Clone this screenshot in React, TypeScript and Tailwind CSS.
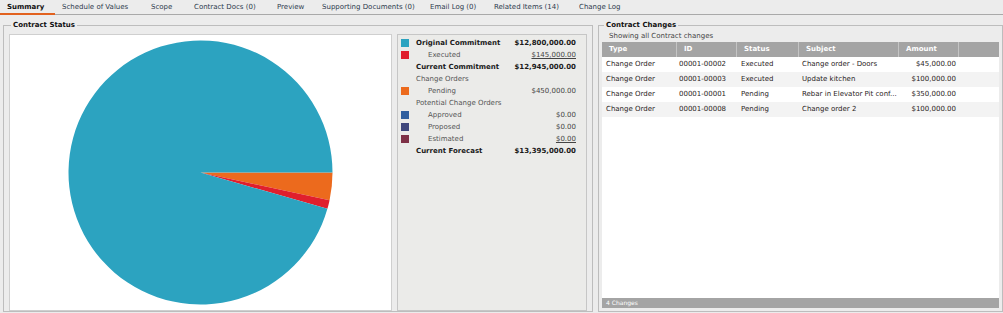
const tabs = [
  { name: 'Summary', w: 'w-[55px]', active: true },
  { name: 'Schedule of Values', w: 'w-[89px]' },
  { name: 'Scope', w: 'w-[43px]' },
  { name: 'Contract Docs (0)', w: 'w-[83px]' },
  { name: 'Preview', w: 'w-[45px]' },
  { name: 'Supporting Documents (0)', w: 'w-[108px]' },
  { name: 'Email Log (0)', w: 'w-[64px]' },
  { name: 'Related Items (14)', w: 'w-[85px]' },
  { name: 'Change Log', w: 'w-[70px]' },
];

const legendRows = [
  { label: 'Original Commitment', value: '$12,800,000.00', color: '#2ca3c0', bold: true },
  { label: 'Executed', value: '$145,000.00', color: '#e01f2d', indent: true, link: true },
  { label: 'Current Commitment', value: '$12,945,000.00', bold: true },
  { label: 'Change Orders' },
  { label: 'Pending', value: '$450,000.00', color: '#ec6a1d', indent: true },
  { label: 'Potential Change Orders' },
  { label: 'Approved', value: '$0.00', color: '#305f9f', indent: true },
  { label: 'Proposed', value: '$0.00', color: '#3f477c', indent: true },
  { label: 'Estimated', value: '$0.00', color: '#7e3046', indent: true, link: true },
  { label: 'Current Forecast', value: '$13,395,000.00', bold: true },
];

const changes = [
  { type: 'Change Order', id: '00001-00002', status: 'Executed', subject: 'Change order - Doors', amount: '$45,000.00' },
  { type: 'Change Order', id: '00001-00003', status: 'Executed', subject: 'Update kitchen', amount: '$100,000.00' },
  { type: 'Change Order', id: '00001-00001', status: 'Pending', subject: 'Rebar in Elevator Pit conf...', amount: '$350,000.00' },
  { type: 'Change Order', id: '00001-00008', status: 'Pending', subject: 'Change order 2', amount: '$100,000.00' },
];

// pie slices, clockwise from 3 o'clock
const slices = [
  { value: 450000, color: '#ec6a1d' },
  { value: 145000, color: '#e01f2d' },
  { value: 12800000, color: '#2ca3c0' },
];

function Pie() {
  const cx = 190.5;
  const cy = 137.5;
  const r = 132;
  const total = slices.reduce((s, x) => s + x.value, 0);
  let start = 0;
  return (
    <svg width="381" height="275" viewBox="0 0 381 275">
      {slices.map((s, i) => {
        const end = start + (s.value / total) * Math.PI * 2;
        const x1 = cx + r * Math.cos(start);
        const y1 = cy + r * Math.sin(start);
        const x2 = cx + r * Math.cos(end);
        const y2 = cy + r * Math.sin(end);
        const large = end - start > Math.PI ? 1 : 0;
        start = end;
        return (
          <path
            key={i}
            d={`M${cx} ${cy} L${x1} ${y1} A${r} ${r} 0 ${large} 1 ${x2} ${y2} Z`}
            fill={s.color}
          />
        );
      })}
    </svg>
  );
}

export default function App() {
  return (
    <div
      className="w-[1003px] h-[313px] overflow-hidden bg-[#ececec] text-[7px] text-[#222]"
      style={{ fontFamily: "'DejaVu Sans', Verdana, sans-serif" }}
    >
      {/* Tabs */}
      <div className="flex h-[15px] border-b border-[#a9a9a9]">
        {tabs.map((t) => (
          <div
            key={t.name}
            className={`${t.w} shrink-0 pl-[7px] pt-[1px] h-[15px] leading-[13px] ${
              t.active ? 'font-bold text-[#111] border-b-2 border-[#e2621f]' : 'text-[#2c3b4c]'
            }`}
          >
            {t.name}
          </div>
        ))}
      </div>

      <div className="flex gap-[5px] pl-[3px] pt-[5px]">
        {/* Contract Status */}
        <fieldset className="w-[588px] h-[292px] border border-[#bdbdbd] px-[5px]">
          <legend className="ml-[2px] px-[2px] font-bold leading-[10px] text-[#111]">Contract Status</legend>
          <div className="flex gap-[5px] mt-[4px]">
            <div className="w-[383px] h-[277px] bg-white border border-[#cfcfcf]">
              <Pie />
            </div>
            <div className="w-[190px] h-[277px] border border-[#c6c6c6] bg-[#ebebe9] pt-[2px] pl-[3px] pr-[10px]">
              {legendRows.map((r) => (
                <div key={r.label} className="flex items-center h-[12px]">
                  <div className="w-[15px] shrink-0">
                    {r.color && <div className="w-[8px] h-[8px]" style={{ background: r.color }} />}
                  </div>
                  <div
                    className={`flex-1 ${r.indent ? 'pl-[12px]' : ''} ${
                      r.bold ? 'font-bold text-[#1a1a1a]' : 'text-[#555]'
                    }`}
                  >
                    {r.label}
                  </div>
                  {r.value && (
                    <div className={`${r.bold ? 'font-bold text-[#1a1a1a]' : 'text-[#444]'} ${r.link ? 'underline' : ''}`}>
                      {r.value}
                    </div>
                  )}
                </div>
              ))}
            </div>
          </div>
        </fieldset>

        {/* Contract Changes */}
        <fieldset className="w-[404px] h-[292px] border border-[#bdbdbd] pl-[3px] pr-[3px]">
          <legend className="ml-[2px] px-[2px] font-bold leading-[10px] text-[#111]">Contract Changes</legend>
          <div className="h-[12px] leading-[10px] pl-[7px] pt-[1px] text-[#444]">Showing all Contract changes</div>
          <div className="w-[397px] h-[266px] bg-white flex flex-col">
            <div className="flex h-[15px] bg-[#a4a4a4] text-white font-bold leading-[15px]">
              <div className="w-[75px] pl-[7px] border-r border-[#c4c4c4]">Type</div>
              <div className="w-[60px] pl-[7px] border-r border-[#c4c4c4]">ID</div>
              <div className="w-[62px] pl-[7px] border-r border-[#c4c4c4]">Status</div>
              <div className="w-[100px] pl-[7px] border-r border-[#c4c4c4]">Subject</div>
              <div className="w-[60px] pl-[7px] border-r border-[#c4c4c4]">Amount</div>
              <div className="flex-1" />
            </div>
            {changes.map((c, i) => (
              <div
                key={c.id}
                className={`flex h-[15px] items-center ${i % 2 === 1 ? 'bg-[#f3f3f3]' : 'bg-white'} text-[#2a1c1c]`}
              >
                <div className="w-[75px] pl-[4px]">{c.type}</div>
                <div className="w-[60px] pl-[2px]">{c.id}</div>
                <div className="w-[62px] pl-[4px]">{c.status}</div>
                <div className="w-[100px] pl-[3px] whitespace-nowrap overflow-hidden">{c.subject}</div>
                <div className="w-[60px] pr-[3px] text-right">{c.amount}</div>
                <div className="flex-1" />
              </div>
            ))}
            <div className="flex-1" />
            <div className="h-[10px] bg-[#a4a4a4] text-white text-[6px] leading-[10px] pl-[4px]">4 Changes</div>
          </div>
        </fieldset>
      </div>
    </div>
  );
}
